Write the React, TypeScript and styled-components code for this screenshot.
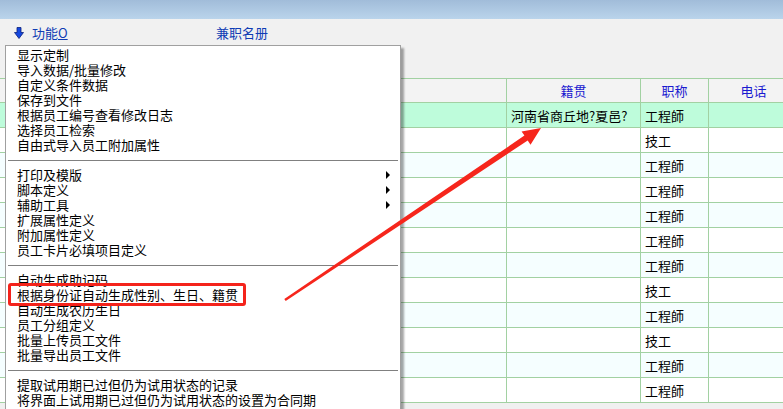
import React from "react";
import styled, { createGlobalStyle } from "styled-components";

const Global = createGlobalStyle`
  html, body { margin: 0; padding: 0; background: #f0f0f0; }
  body { font-family: "Noto Sans CJK SC", "Noto Sans", sans-serif; font-size: 13px; }
  * { box-sizing: border-box; }
`;

const Page = styled.div`
  position: relative;
  width: 783px;
  height: 409px;
  overflow: hidden;
  background: #f0f0f0;
  display: flex;
  flex-direction: column;
`;

const TitleBar = styled.div`
  height: 19px;
  flex: none;
  background: linear-gradient(to bottom, #a1bcd9, #bad4eb);
`;

const TopArea = styled.div`
  height: 59px;
  flex: none;
  background: #f1f1f1;
`;

const Toolbar = styled.div`
  height: 27px;
  display: flex;
  align-items: center;
  padding-left: 14px;
`;

const ToolButton = styled.div<{ $w?: number }>`
  display: flex;
  align-items: center;
  gap: 8px;
  width: ${(p) => (p.$w ? `${p.$w}px` : "auto")};
  color: #0f3cb4;
  font-size: 13px;
  line-height: 15px;
  white-space: nowrap;
`;

const Underline = styled.span`
  text-decoration: underline;
`;

const Grid = styled.div`
  display: grid;
  grid-template-columns: 507px 134px 68px 90px;
  border-top: 1px solid #a2d1a2;
  width: 799px;
`;

const HeadCell = styled.div`
  height: 24px;
  border-right: 1px solid #a2d1a2;
  border-bottom: 1px solid #a2d1a2;
  background: #f3f3f3;
  color: #1a1ad0;
  display: flex;
  align-items: center;
  justify-content: center;
  font-size: 13px;
`;

const Cell = styled.div<{ $bg: string }>`
  height: 25px;
  border-right: 1px solid #a2d1a2;
  border-bottom: 1px solid #a2d1a2;
  background: ${(p) => p.$bg};
  color: #000;
  display: flex;
  align-items: center;
  padding-left: 4px;
  font-size: 13px;
  white-space: nowrap;
  overflow: hidden;
`;

const Menu = styled.div`
  position: absolute;
  left: 5px;
  top: 45px;
  width: 396px;
  height: 400px;
  background: #fff;
  border: 1px solid #a0a0a0;
  box-shadow: 3px 3px 2px rgba(0, 0, 0, 0.35);
  padding-top: 1px;
  display: flex;
  flex-direction: column;
`;

const Item = styled.div`
  height: 15px;
  line-height: 15px;
  padding-left: 11px;
  padding-right: 10px;
  font-size: 13px;
  color: #000;
  white-space: nowrap;
  display: flex;
  align-items: center;
  justify-content: space-between;
  flex: none;
`;

const SubArrow = styled.span`
  width: 0;
  height: 0;
  border-left: 4px solid #000;
  border-top: 4px solid transparent;
  border-bottom: 4px solid transparent;
`;

const Separator = styled.div`
  height: 1px;
  margin: 8px 2px 6px;
  background: #808080;
  flex: none;
`;

const Highlight = styled.div`
  position: absolute;
  left: 8px;
  top: 283px;
  width: 238px;
  height: 23px;
  border: 3px solid #f4231b;
  border-radius: 3px;
`;

const Overlay = styled.svg`
  position: absolute;
  left: 0;
  top: 0;
  pointer-events: none;
`;

type MenuEntry = { t: string; sub?: boolean } | "sep";

const menu: MenuEntry[] = [
  { t: "显示定制" },
  { t: "导入数据/批量修改" },
  { t: "自定义条件数据" },
  { t: "保存到文件" },
  { t: "根据员工编号查看修改日志" },
  { t: "选择员工检索" },
  { t: "自由式导入员工附加属性" },
  "sep",
  { t: "打印及模版", sub: true },
  { t: "脚本定义", sub: true },
  { t: "辅助工具", sub: true },
  { t: "扩展属性定义" },
  { t: "附加属性定义" },
  { t: "员工卡片必填项目定义" },
  "sep",
  { t: "自动生成助记码" },
  { t: "根据身份证自动生成性别、生日、籍贯" },
  { t: "自动生成农历生日" },
  { t: "员工分组定义" },
  { t: "批量上传员工文件" },
  { t: "批量导出员工文件" },
  "sep",
  { t: "提取试用期已过但仍为试用状态的记录" },
  { t: "将界面上试用期已过但仍为试用状态的设置为合同期" },
  { t: "提取合同期已过但仍为试用状态的记录" },
];

const titles = [
  "工程師", "技工", "工程師", "工程師", "工程師", "工程師",
  "工程師", "技工", "工程師", "技工", "工程師", "工程師",
];

const rowBg = (i: number) => (i === 0 ? "#befcdb" : i % 2 === 0 ? "#f5feff" : "#ffffff");

const DownIcon = () => (
  <svg width="10" height="12" viewBox="0 0 10 12">
    <path d="M3 0.5 H7 V5.5 H9.5 L5 11.5 L0.5 5.5 H3 Z" fill="#1448e0" stroke="#0a1f7a" strokeWidth="0.8" />
  </svg>
);

export default function App() {
  return (
    <>
      <Global />
      <Page>
        <TitleBar />
        <TopArea>
          <Toolbar>
            <ToolButton $w={202}>
              <DownIcon />
              <span>
                功能<Underline>O</Underline>
              </span>
            </ToolButton>
            <ToolButton>兼职名册</ToolButton>
          </Toolbar>
        </TopArea>
        <Grid>
          <HeadCell />
          <HeadCell>籍贯</HeadCell>
          <HeadCell>职称</HeadCell>
          <HeadCell>电话</HeadCell>
          {titles.map((t, i) => (
            <React.Fragment key={i}>
              <Cell $bg={rowBg(i)} />
              <Cell $bg={rowBg(i)}>{i === 0 ? "河南省商丘地?夏邑?" : ""}</Cell>
              <Cell $bg={rowBg(i)}>{t}</Cell>
              <Cell $bg={rowBg(i)} />
            </React.Fragment>
          ))}
        </Grid>
        <Menu>
          {menu.map((m, i) =>
            m === "sep" ? (
              <Separator key={i} />
            ) : (
              <Item key={i}>
                <span>{m.t}</span>
                {m.sub && <SubArrow />}
              </Item>
            )
          )}
        </Menu>
        <Highlight />
        <Overlay width="783" height="409" viewBox="0 0 783 409">
          <polygon
            points="285.7,301 527.7,140.5 530.5,144.7 541,128 521.6,131.4 524.4,135.6 284.3,299"
            fill="#f6261c"
          />
        </Overlay>
      </Page>
    </>
  );
}
